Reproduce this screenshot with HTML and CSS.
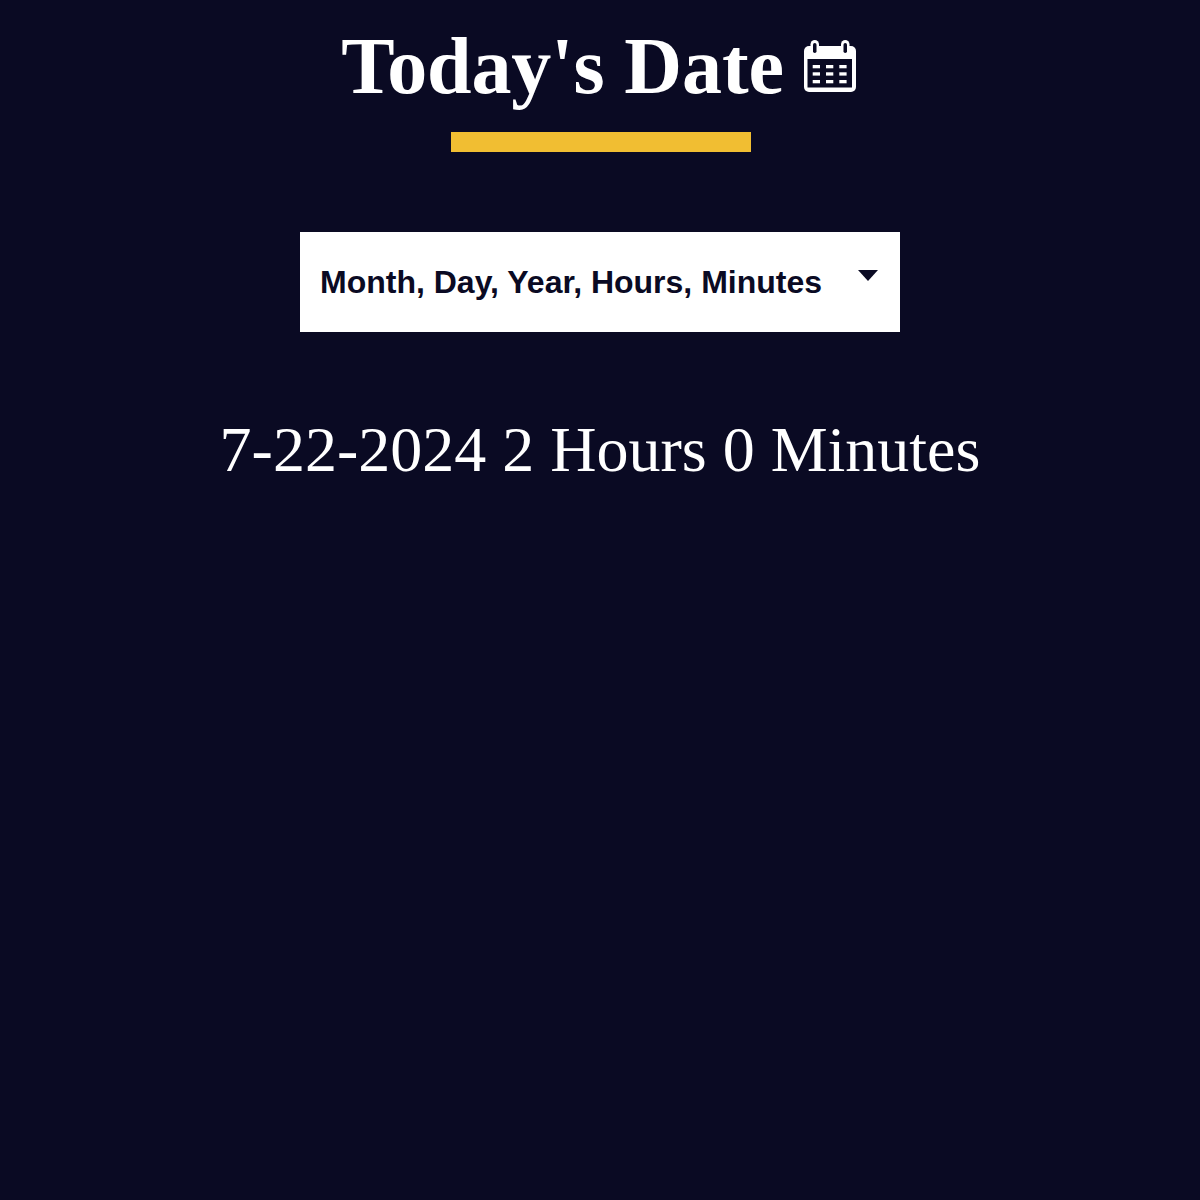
FILE: index.html
```html
<!DOCTYPE html>
<html lang="en">

<head>
    <meta charset="UTF-8">
    <meta name="viewport" content="width=device-width, initial-scale=1.0">
    <title>Today's Date</title>
    <link rel="stylesheet" href="styles.css">
</head>

<body>
    <main>
        <h1 class="title">Today's Date
            <svg class="cal-icon" viewBox="0 0 52 52" aria-hidden="true">
                <rect class="cal-white" x="0" y="6" width="52" height="46" rx="5"/>
                <rect class="cal-dark" x="3.500" y="19" width="44.500" height="28.500"/>
                <rect class="cal-white" x="6.500" y="0" width="8.500" height="14" rx="4.250"/>
                <rect class="cal-white" x="37" y="0" width="8.500" height="14" rx="4.250"/>
                <rect class="cal-dark" x="9" y="3" width="3.500" height="10" rx="1.750"/>
                <rect class="cal-dark" x="39.500" y="3" width="3.500" height="10" rx="1.750"/>
                <rect class="cal-white" x="8.700" y="25" width="7.300" height="3.300"/>
                <rect class="cal-white" x="22" y="25" width="7.300" height="3.300"/>
                <rect class="cal-white" x="35.300" y="25" width="7.300" height="3.300"/>
                <rect class="cal-white" x="8.700" y="32.300" width="7.300" height="3.300"/>
                <rect class="cal-white" x="22" y="32.300" width="7.300" height="3.300"/>
                <rect class="cal-white" x="35.300" y="32.300" width="7.300" height="3.300"/>
                <rect class="cal-white" x="8.700" y="40" width="7.300" height="3.300"/>
                <rect class="cal-white" x="22" y="40" width="7.300" height="3.300"/>
                <rect class="cal-white" x="35.300" y="40" width="7.300" height="3.300"/>
            </svg>
        </h1>
        <div class="underline"></div>
        <div class="picker">
            <span class="picker-text">Month, Day, Year, Hours, Minutes</span>
            <span class="caret"></span>
        </div>
        <p class="result">7-22-2024 2 Hours 0 Minutes</p>
    </main>
</body>

</html>
```

FILE: styles.css
```css
html,
body {
    margin: 0;
    padding: 0;
    box-sizing: border-box;
}

body {
    min-height: 100vh;
    background: #0a0a23;
    color: #fff;
    font-family: "Liberation Serif", serif;
}

main {
    display: flex;
    flex-direction: column;
    align-items: center;
}

.title {
    margin: 22px 3px 0 0;
    font-size: 80px;
    line-height: 88px;
    font-weight: bold;
    letter-spacing: -0.1px;
}

.cal-icon {
    width: 52px;
    height: 52px;
    vertical-align: 1px;
}

.cal-white {
    fill: #fff;
}

.cal-dark {
    fill: #0a0a23;
}

.underline {
    width: 300px;
    height: 20px;
    margin: 22px 0 0 1px;
    background: #f1be32;
}

.picker {
    display: flex;
    align-items: center;
    justify-content: space-between;
    box-sizing: border-box;
    width: 600px;
    height: 100px;
    margin-top: 80px;
    padding: 0 22px 0 20px;
    background: #fff;
    color: #0a0a23;
    font-family: "Liberation Sans", sans-serif;
    font-size: 32px;
    font-weight: bold;
}

.caret {
    border-left: 10px solid transparent;
    border-right: 10px solid transparent;
    border-top: 11px solid #0a0a23;
    margin-bottom: 13px;
}

.result {
    margin: 81px 0 0;
    font-size: 64px;
    line-height: 74px;
}
```
